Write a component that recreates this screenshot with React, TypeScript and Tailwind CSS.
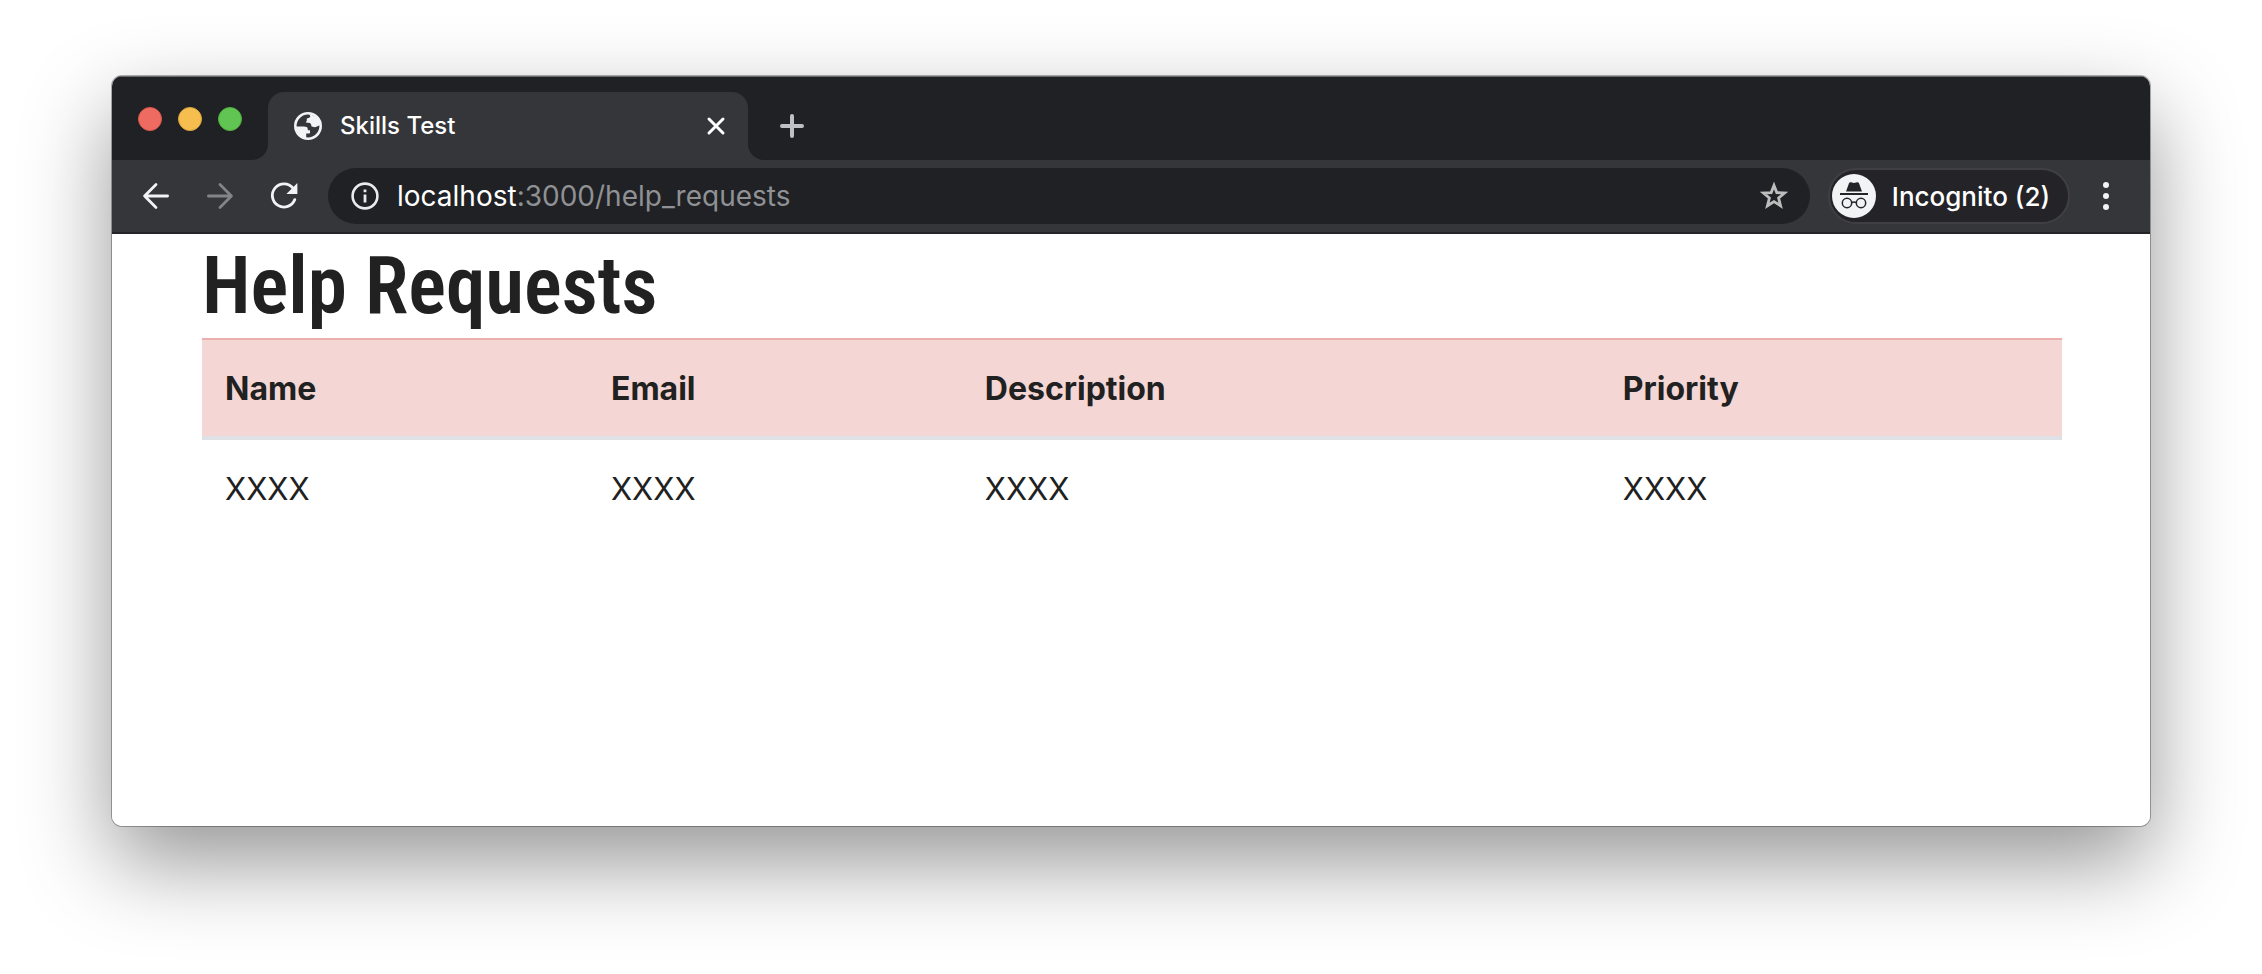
const columns = ["Name", "Email", "Description", "Priority"];
const rows = [["XXXX", "XXXX", "XXXX", "XXXX"]];

function GlobeIcon() {
  return (
    <svg viewBox="0 0 28 28" className="size-7 shrink-0" aria-hidden="true">
      <circle cx="14" cy="14" r="12.7" fill="none" stroke="#f1f3f4" strokeWidth="2.6" />
      <path
        fill="#f1f3f4"
        d="M1.5 14.6H9Q13.6 14.4 13.8 17V18.2H16V21.2Q14.4 21.6 12.2 21.6V26.5Q3 25 1.5 14.6ZM15 2.2 16.4 4.2Q16 6 12.8 6.4V8.4L11.8 10.6 16 11Q17.2 11.6 17.6 14.4L21 15.2 26.5 13Q25 4 15 2.2Z"
      />
    </svg>
  );
}

function IncognitoIcon() {
  return (
    <svg viewBox="0 0 44 44" className="size-11 shrink-0" aria-hidden="true">
      <circle cx="22" cy="22" r="22" fill="#f1f3f4" />
      <path fill="#242428" d="M14 17.5 17 9.2Q17.6 8 19 8.3L22 9 25 8.3Q26.4 8 27 9.2L30 17.5ZM8 19H36V21H8Z" />
      <g fill="none" stroke="#242428" strokeWidth="1.5">
        <circle cx="15" cy="29" r="4.7" />
        <circle cx="29" cy="29" r="4.7" />
        <path d="M19.7 28.6Q22 27.4 24.3 28.6" />
      </g>
    </svg>
  );
}

function TabStrip() {
  return (
    <div className="flex h-[84px] items-end border-t border-[#6a6b6d] bg-[#202124]">
      <div className="flex w-[140px] gap-4 self-start pt-[30px] pl-[26px]">
        <button aria-label="Close window" className="size-6 rounded-full border border-[#d9574c] bg-[#ed6b60]" />
        <button aria-label="Minimize window" className="size-6 rounded-full border border-[#d9a53c] bg-[#f5be4f]" />
        <button aria-label="Zoom window" className="size-6 rounded-full border border-[#4fae3c] bg-[#61c554]" />
      </div>
      <svg viewBox="0 0 16 16" className="size-4 shrink-0" aria-hidden="true">
        <path fill="#35363a" d="M16 0V16H0A16 16 0 0 0 16 0Z" />
      </svg>
      <div className="flex h-[68px] w-[480px] items-center rounded-t-2xl bg-[#35363a] pr-[22px] pl-[26px]">
        <GlobeIcon />
        <span className="ml-[18px] flex-1 text-2xl font-medium text-white">Skills Test</span>
        <button aria-label="Close tab">
          <svg viewBox="0 0 20 20" className="size-5" fill="none" stroke="#fff" strokeWidth="3" strokeLinecap="round">
            <path d="M3 3 17 17M17 3 3 17" />
          </svg>
        </button>
      </div>
      <svg viewBox="0 0 16 16" className="size-4 shrink-0" aria-hidden="true">
        <path fill="#35363a" d="M0 0V16H16A16 16 0 0 1 0 0Z" />
      </svg>
      <button aria-label="New tab" className="mb-[22px] ml-4">
        <svg viewBox="0 0 24 24" className="size-6" fill="none" stroke="#bdc1c6" strokeWidth="4" strokeLinecap="round">
          <path d="M12 2V22M2 12H22" />
        </svg>
      </button>
    </div>
  );
}

function Toolbar() {
  return (
    <div className="flex h-[74px] items-center border-b-2 border-[#242428] bg-[#35363a] pr-9 pl-[30px]">
      <button aria-label="Back">
        <svg viewBox="0 0 28 28" className="size-7" fill="none" stroke="#f1f3f4" strokeWidth="2.8" strokeLinecap="round" strokeLinejoin="round">
          <path d="M25.6 14H2.6M14 2.6 2.6 14 14 25.4" />
        </svg>
      </button>
      <button aria-label="Forward" disabled className="ml-9">
        <svg viewBox="0 0 28 28" className="size-7" fill="none" stroke="#838487" strokeWidth="2.8" strokeLinecap="round" strokeLinejoin="round">
          <path d="M2.4 14H25.4M14 2.6 25.4 14 14 25.4" />
        </svg>
      </button>
      <button aria-label="Reload" className="ml-9">
        <svg viewBox="0 0 28 28" className="size-7" fill="none">
          <path d="M23 6.2A11.6 11.6 0 1 0 24.8 17.6" stroke="#f1f3f4" strokeWidth="2.8" strokeLinecap="round" />
          <path d="M27.4 1V12H16.4Z" fill="#f1f3f4" />
        </svg>
      </button>
      <div className="ml-[30px] flex h-14 flex-1 items-center rounded-full bg-[#202124] pr-5 pl-[23px]">
        <svg viewBox="0 0 28 28" className="size-7 shrink-0" aria-hidden="true">
          <circle cx="14" cy="14" r="12.4" fill="none" stroke="#e8eaed" strokeWidth="2.6" />
          <path d="M12.6 7.4H15.4V10.2H12.6ZM12.6 12.4H15.4V20.6H12.6Z" fill="#e8eaed" />
        </svg>
        <a href="#help-requests" className="ml-[18px] flex-1 text-[28px] text-[#8f9194]">
          <span className="text-white">localhost</span>:3000/help_requests
        </a>
        <button aria-label="Bookmark this page">
          <svg viewBox="0 0 32 32" className="size-8" fill="none" stroke="#bdbdbd" strokeWidth="2.8">
            <path d="M16 5.4 18.8 12.6 26.6 13 20.6 18 22.6 25.8 16 21.6 9.4 25.8 11.4 18 5.4 13 13.2 12.6Z" />
          </svg>
        </button>
      </div>
      <button className="ml-[18px] flex h-14 items-center gap-4 rounded-full border-2 border-[#3f3f44] bg-[#242428] pr-[18px] pl-[2px] text-[26px] font-medium text-white">
        <IncognitoIcon />
        Incognito (2)
      </button>
      <button aria-label="Menu" className="ml-7 flex h-7 w-4 flex-col items-center justify-between">
        <span className="size-[6px] rounded-full bg-[#f1f3f4]" />
        <span className="size-[6px] rounded-full bg-[#f1f3f4]" />
        <span className="size-[6px] rounded-full bg-[#f1f3f4]" />
      </button>
    </div>
  );
}

function HelpRequests() {
  return (
    <main id="help-requests" className="flex-1 bg-white pr-[88px] pl-[90px] text-[#212121]">
      <h1 className="pt-1 pb-1 font-['Roboto_Condensed','Liberation_Sans_Narrow',sans-serif] text-[79px] leading-[96px] font-semibold">
        Help Requests
      </h1>
      <table className="w-full table-fixed border-separate border-spacing-0 text-left text-[31px] leading-[48px]">
        <colgroup>
          <col className="w-[20.75%]" />
          <col className="w-[20.1%]" />
          <col className="w-[34.3%]" />
          <col />
        </colgroup>
        <thead>
          <tr>
            {columns.map((column) => (
              <th key={column} scope="col" className="border-t-2 border-b-4 border-t-[#ecb0ac] border-b-[#dee2e6] bg-[#f4d6d4] px-[23px] pt-[25px] pb-[23px] text-[32px] font-bold">
                {column}
              </th>
            ))}
          </tr>
        </thead>
        <tbody>
          {rows.map((row, r) => (
            <tr key={r}>
              {row.map((value, c) => (
                <td key={c} className="px-[23px] pt-[25px] pb-[23px]">{value}</td>
              ))}
            </tr>
          ))}
        </tbody>
      </table>
    </main>
  );
}

export default function App() {
  return (
    <div className="flex min-h-screen flex-col bg-white px-28 pt-[76px] pb-[148px] font-[Inter,sans-serif]">
      <div className="flex flex-1 flex-col overflow-hidden rounded-[10px] shadow-[0_0_0_1px_rgba(0,0,0,0.3),0_36px_88px_rgba(0,0,0,0.42)]">
        <TabStrip />
        <Toolbar />
        <HelpRequests />
      </div>
    </div>
  );
}
